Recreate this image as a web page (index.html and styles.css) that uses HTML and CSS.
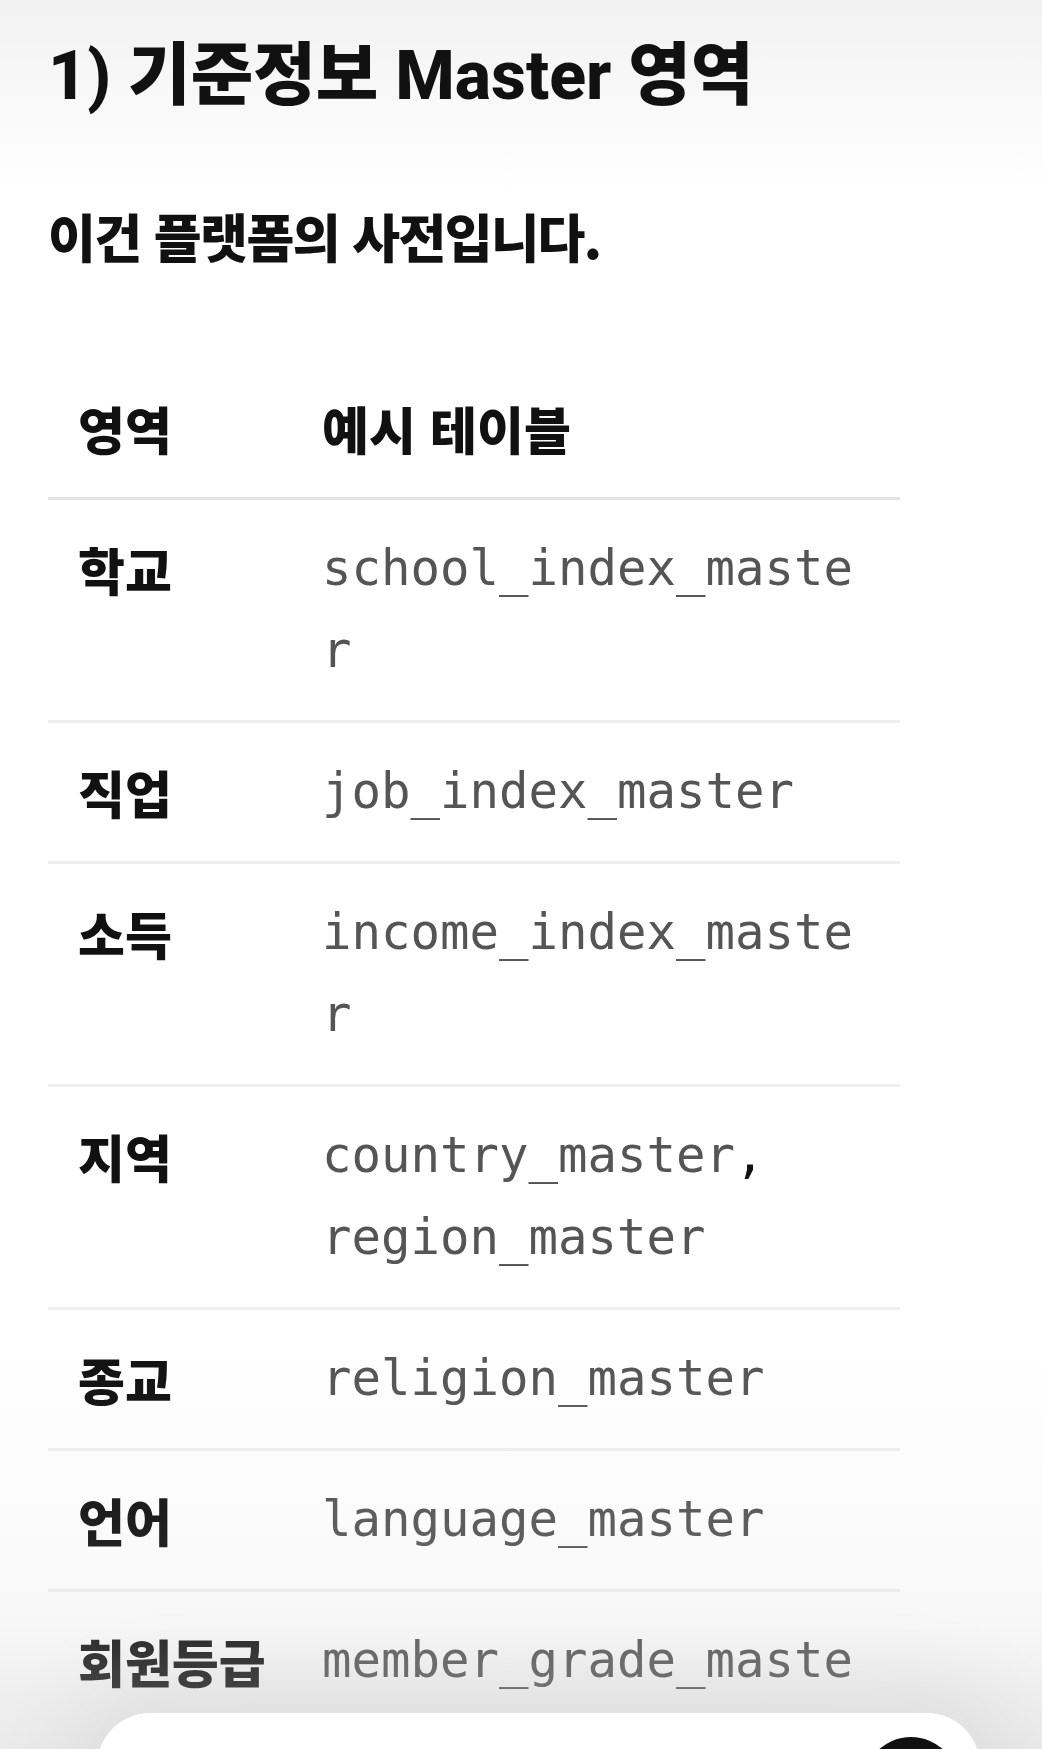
FILE: index.html
```html
<!DOCTYPE html>
<html lang="ko">
<head>
<meta charset="utf-8">
<title>기준정보 Master 영역</title>
<link rel="stylesheet" href="styles.css">
</head>
<body>
<div class="screen">
  <main class="doc">
    <h1 class="title">1) 기준정보 Master 영역</h1>
    <p class="lead">이건 플랫폼의 사전입니다.</p>
    <table class="master">
      <colgroup><col class="col-area"><col class="col-table"></colgroup>
      <thead>
        <tr><th>영역</th><th>예시 테이블</th></tr>
      </thead>
      <tbody>
        <tr><th>학교</th><td><code>school_index_master</code></td></tr>
        <tr><th>직업</th><td><code>job_index_master</code></td></tr>
        <tr><th>소득</th><td><code>income_index_master</code></td></tr>
        <tr><th>지역</th><td><code>country_master</code>, <code>region_master</code></td></tr>
        <tr><th>종교</th><td><code>religion_master</code></td></tr>
        <tr><th>언어</th><td><code>language_master</code></td></tr>
        <tr><th>회원등급</th><td><code>member_grade_master</code></td></tr>
      </tbody>
    </table>
  </main>
  <div class="scrim"></div>
  <div class="sheet"><span class="sheet-btn"></span></div>
</div>
</body>
</html>
```

FILE: styles.css
```css
html, body {
  margin: 0;
  padding: 0;
}

body {
  background: #ffffff;
  color: #111111;
  font-family: "Noto Sans CJK KR", "Noto Sans", sans-serif;
}

.screen {
  position: relative;
  height: 100vh;
  overflow: hidden;
  background: linear-gradient(to bottom, #f1f1f1 0px, #f8f8f8 90px, #ffffff 200px);
}

.doc {
  padding: 35px 0 0 48px;
}

.title {
  margin: 0 0 82px;
  font-family: "Roboto", "Noto Sans CJK KR", sans-serif;
  font-size: 68px;
  line-height: 83px;
  font-weight: 800;
  color: #111111;
}

.lead {
  margin: 0 0 87px;
  font-size: 52px;
  line-height: 72px;
  font-weight: 800;
  letter-spacing: -1.5px;
  color: #111111;
}

.master {
  width: 852px;
  border-collapse: collapse;
  table-layout: fixed;
}

.col-area {
  width: 244px;
}

.master th,
.master td {
  padding: 28px 30px;
  text-align: left;
  vertical-align: top;
  line-height: 82px;
  border-bottom: 3px solid #efefef;
}

.master th {
  font-size: 51px;
  font-weight: 800;
  white-space: nowrap;
  color: #111111;
}

.master thead th {
  border-bottom-color: #e4e4e4;
}

.master td {
  font-family: "DejaVu Sans Mono", "Liberation Mono", monospace;
  font-size: 49px;
  color: #111111;
  overflow-wrap: anywhere;
}

.master code {
  font-family: inherit;
  font-size: 1em;
  color: #555555;
}

.scrim {
  position: absolute;
  left: 0;
  right: 0;
  bottom: 0;
  height: 420px;
  pointer-events: none;
  background: linear-gradient(to bottom,
    rgba(198, 198, 198, 0) 0%,
    rgba(198, 198, 198, 0.07) 45%,
    rgba(198, 198, 198, 0.14) 70%,
    rgba(198, 198, 198, 0.3) 88%,
    rgba(198, 198, 198, 0.36) 100%);
}

.sheet {
  position: absolute;
  left: 97px;
  right: 62px;
  bottom: -164px;
  height: 200px;
  background: #ffffff;
  border-radius: 53px;
  box-shadow: 0 -6px 90px 30px rgba(0, 0, 0, 0.06);
}

.sheet-btn {
  position: absolute;
  top: 24px;
  right: 21px;
  width: 96px;
  height: 96px;
  border-radius: 50%;
  background: #111111;
}
```
